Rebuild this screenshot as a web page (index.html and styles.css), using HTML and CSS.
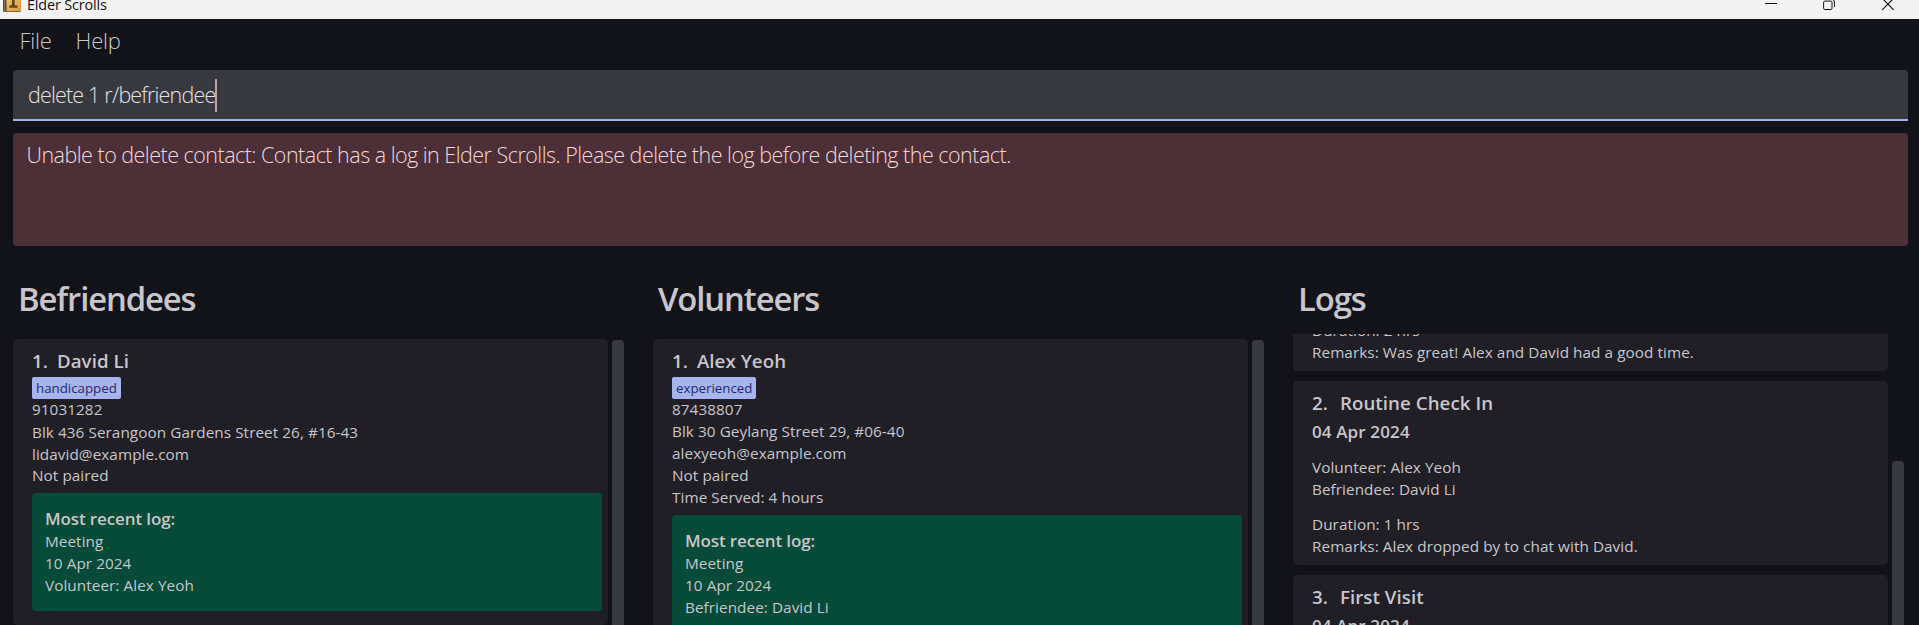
FILE: index.html
```html
<!DOCTYPE html>
<html lang="en">
<head>
<meta charset="utf-8">
<title>Elder Scrolls</title>
<link rel="stylesheet" href="styles.css">
</head>
<body>
<header class="titlebar">
  <svg class="app-icon" width="18" height="13" viewBox="0 0 18 13">
    <defs><linearGradient id="cover" x1="0" y1="0" x2="1" y2="1"><stop offset="0" stop-color="#f0c566"/><stop offset="1" stop-color="#cf9a3e"/></linearGradient></defs>
    <path d="M0 0H18V11Q18 12 17 12H1Q0 12 0 11Z" fill="url(#cover)"/>
    <path d="M0 0H3.5V12H1Q0 12 0 11Z" fill="#5f4a3c"/>
    <path d="M1 0H2V12H1Z" fill="#8a6d55"/>
    <path d="M1 11.5H17.5" stroke="#8d6a32"/>
    <path d="M9 0H11.6V4L12.2 5.5H14.5V7.8H6.3V5.5H8.4L9 4Z" fill="#604322"/>
  </svg>
  <span class="app-title">Elder Scrolls</span>
  <svg class="window-buttons" width="130" height="19" viewBox="0 0 130 19" fill="none" stroke="#111">
    <path d="M0 3.5H12"/>
    <rect x="58.6" y="1.1" width="8.4" height="8.4" rx="1.2"/>
    <path d="M60.5 -1H66.5Q69.4 -1 69.4 2V7"/>
    <path d="M117.2 -1.6L128.6 9.8M128.6 -1.6L117.2 9.8" stroke-width="1.1"/>
  </svg>
</header>
<nav class="menu"><span>File</span><span class="menu-help">Help</span></nav>
<div class="command"><span class="command-text">delete 1 r/befriendee</span><i class="caret"></i></div>
<div class="result">Unable to delete contact: Contact has a log in Elder Scrolls. Please delete the log before deleting the contact.</div>
<main class="panels">
  <section class="panel">
    <h1 class="panel-title">Befriendees</h1>
    <div class="panel-body">
      <div class="list">
        <article class="card person">
          <h2 class="name"><span>1.</span><span>David Li</span></h2>
          <span class="tag">handicapped</span>
          <p>91031282</p>
          <p class="address">Blk 436 Serangoon Gardens Street 26, #16-43</p>
          <p>lidavid@example.com</p>
          <p class="pairing">Not paired</p>
          <div class="recent">
            <h3 class="sub">Most recent log:</h3>
            <p>Meeting</p>
            <p>10 Apr 2024</p>
            <p>Volunteer: Alex Yeoh</p>
          </div>
        </article>
      </div>
      <div class="scroll"></div>
    </div>
  </section>
  <section class="panel">
    <h1 class="panel-title">Volunteers</h1>
    <div class="panel-body">
      <div class="list">
        <article class="card person tall">
          <h2 class="name"><span>1.</span><span>Alex Yeoh</span></h2>
          <span class="tag">experienced</span>
          <p>87438807</p>
          <p>Blk 30 Geylang Street 29, #06-40</p>
          <p>alexyeoh@example.com</p>
          <p>Not paired</p>
          <p>Time Served: 4 hours</p>
          <div class="recent">
            <h3 class="sub">Most recent log:</h3>
            <p>Meeting</p>
            <p>10 Apr 2024</p>
            <p>Befriendee: David Li</p>
          </div>
        </article>
      </div>
      <div class="scroll"></div>
    </div>
  </section>
  <section class="panel">
    <h1 class="panel-title">Logs</h1>
    <div class="panel-body">
      <div class="list">
        <article class="card log log-first">
          <p>Duration: 2 hrs</p>
          <p>Remarks: Was great! Alex and David had a good time.</p>
        </article>
        <article class="card log">
          <h2 class="name"><span>2.</span><span>Routine Check In</span></h2>
          <h3 class="sub date">04 Apr 2024</h3>
          <div class="group"><p>Volunteer: Alex Yeoh</p><p>Befriendee: David Li</p></div>
          <div class="group"><p>Duration: 1 hrs</p><p>Remarks: Alex dropped by to chat with David.</p></div>
        </article>
        <article class="card log">
          <h2 class="name"><span>3.</span><span>First Visit</span></h2>
          <h3 class="sub date">04 Apr 2024</h3>
        </article>
      </div>
      <div class="scroll scroll-logs"></div>
    </div>
  </section>
</main>
</body>
</html>
```
FILE: styles.css
```css
* { box-sizing: border-box; }
body {
  margin: 0;
  height: 625px;
  overflow: hidden;
  display: flex;
  flex-direction: column;
  background: #121318;
  color: #c8c6cb;
  font: 400 15.3px/22px "Open Sans", "Noto Sans", sans-serif;
  letter-spacing: 0.06px;
}
h1, h2, h3, p { margin: 0; }
p { white-space: nowrap; }

.titlebar {
  flex: none;
  display: flex;
  align-items: flex-start;
  height: 19px;
  padding: 0 24px 0 3px;
  overflow: hidden;
  background: #f3f3f3;
  color: #111;
}
.app-title {
  margin: -6px 0 0 6px;
  font-size: 14.4px;
  letter-spacing: -0.14px;
}
.window-buttons { margin-left: auto; }

.menu {
  flex: none;
  display: flex;
  gap: 24px;
  height: 51px;
  padding: 4px 19.5px 0;
  color: #c9c9ce;
  font-size: 22px;
  font-weight: 300;
  line-height: 34px;
  letter-spacing: -0.25px;
}

.command {
  flex: none;
  display: flex;
  align-items: flex-start;
  height: 51px;
  margin: 0 11px 0 13px;
  padding: 9px 15px;
  border-bottom: 2px solid #a3b2ec;
  border-radius: 4px 4px 0 0;
  background: #38393e;
  color: #e4e1e6;
  font-size: 21.5px;
  font-weight: 300;
  line-height: 32px;
}
.command-text { letter-spacing: -0.82px; }
.caret {
  width: 2px;
  height: 33px;
  background: #b5a3a3;
}

.result {
  flex: none;
  height: 113px;
  margin: 12px 11px 0 13px;
  padding: 6px 13.5px;
  border-radius: 4px;
  background: #4d2f37;
  color: #f2d8d8;
  font-size: 21.5px;
  font-weight: 300;
  line-height: 32px;
  letter-spacing: -0.52px;
}

.panels {
  flex: 1;
  min-height: 0;
  display: flex;
  gap: 16px;
  padding: 31px 15px 0 13px;
}
.panel {
  flex: none;
  width: 624px;
  display: flex;
  flex-direction: column;
}
.panel-title {
  height: 57px;
  padding-left: 5px;
  font-size: 32.8px;
  font-weight: 600;
  line-height: 44px;
  letter-spacing: -1.1px;
}
.panel-body {
  flex: 1;
  min-height: 0;
  display: flex;
  gap: 4px;
  overflow: hidden;
}
.list { width: 595px; }

.card {
  height: 286px;
  margin-top: 5px;
  padding: 9px 6px 0 19px;
  border-radius: 5px;
  background: #201f25;
}
.card.tall { height: 400px; }
.name {
  display: flex;
  gap: 12px;
  font-size: 18.7px;
  font-weight: 600;
  line-height: 26px;
  letter-spacing: 0.06px;
}
.person .name { gap: 9px; }
.tag {
  display: block;
  width: fit-content;
  height: 22px;
  margin: 3px 0 -1px;
  padding: 0 4px;
  border-radius: 2px;
  background: #a8b4ee;
  color: #1f2b69;
  font-size: 13.3px;
  letter-spacing: 0;
}
.address { margin-top: 1px; }
.pairing { margin-top: -1px; }
.recent {
  margin-top: 7px;
  padding: 14px 13px;
  border-radius: 4px;
  background: #054b38;
}
.sub {
  font-size: 17px;
  font-weight: 600;
  line-height: 24px;
  letter-spacing: -0.12px;
}
.recent .sub { margin-bottom: -1px; }
.recent p:last-child { margin-bottom: 1px; }

.card.log {
  height: 184px;
  margin-top: 10px;
}
.card.log-first {
  height: 52px;
  margin-top: -15px;
  padding-top: 0;
  border-radius: 0 0 5px 5px;
}
.date { margin-top: 4px; letter-spacing: 0.13px; }
.date + .group { margin-top: 12px; }
.group { margin-top: 13px; }

.scroll {
  width: 12px;
  margin-top: 6px;
  border-radius: 4px 4px 0 0;
  background: #38393e;
}
.scroll-logs { margin-top: 127px; }
```
